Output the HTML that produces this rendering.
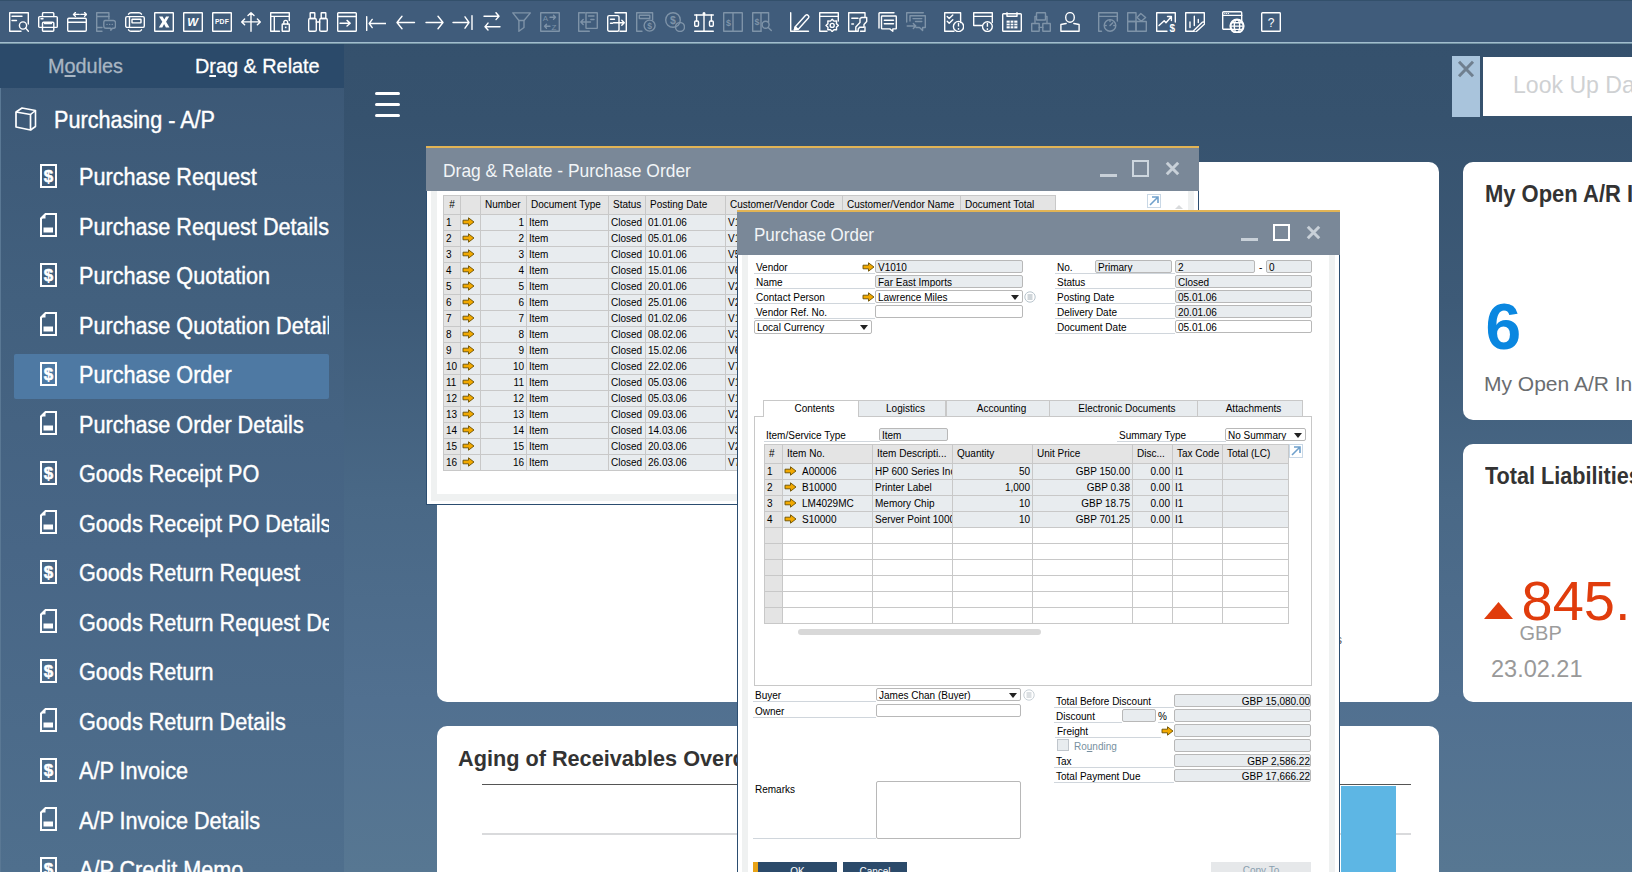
<!DOCTYPE html><html><head><meta charset="utf-8"><style>
*{box-sizing:border-box;margin:0;padding:0}
html,body{width:1632px;height:872px;overflow:hidden}
body{position:relative;font-family:"Liberation Sans",sans-serif;background:linear-gradient(180deg,#34506c 0px,#36526e 120px,#3d5a77 300px,#496886 500px,#517090 700px,#577792 872px)}
.a{position:absolute}
.nw{white-space:nowrap}
#tb{left:0;top:0;width:1632px;height:42px;background:#405c7b;border-top:1px solid #33506b}
#tbline{left:0;top:42px;width:1632px;height:2px;background:linear-gradient(180deg,#a2bdce 50%,#7393a2 50%)}
#side{left:0;top:44px;width:344px;height:828px;background:linear-gradient(180deg,#3b5775 0px,#42607e 256px,#486686 506px,#4f6f8d 828px);border-left:1px solid #5a7894}
#tabs{left:0;top:44px;width:344px;height:44px;background:#2b4a6a}
.st{color:#fff;font-size:23px;white-space:nowrap;line-height:26px;transform:scaleX(0.94);transform-origin:0 0;-webkit-text-stroke:0.4px #fff}
.card{background:#fff;border-radius:10px}
.win{background:#fff}
.tbar{background:#7a8898;border-top:2px solid #e2b455}
.ttl{color:#f2f5f7;font-size:17px;line-height:20px;white-space:nowrap}
.g{border-collapse:collapse;font-size:10px;color:#000;table-layout:fixed}
.g td{border:1px solid #c8c8c8;height:16px;padding:0 2px;white-space:nowrap;overflow:hidden;background:#e8ecef;line-height:14px}
.g tr.h td{background:#e4e4e4;height:19px}
.g td.rn{background:#e4e4e4}
.g td.r{text-align:right}
.g tr.e td{background:#fff}
.g tr.e td.rn{background:#e4e4e4}
.lbl{font-size:10px;color:#000;white-space:nowrap;line-height:13px;padding-top:1px}
.ul{border-bottom:1px solid #d0d6dc}
.fld{border:1px solid #b8b8b8;border-radius:2px;background:#e8ecef;font-size:10px;line-height:11px;padding:1px 2px 0 2px;white-space:nowrap;overflow:hidden}
.fw{background:#fff}
.dd:after{content:"";position:absolute;right:3px;top:4px;border-left:4px solid transparent;border-right:4px solid transparent;border-top:5px solid #222}
.tab{border:1px solid #c8c8c8;border-bottom:none;background:#e8ecef;font-size:10px;text-align:center;line-height:15px;white-space:nowrap;padding-left:7px}
</style></head><body>
<div id="tb" class="a"></div><div id="tbline" class="a"></div>
<svg class="a" style="left:9px;top:12px" width="20" height="20" viewBox="0 0 20 20" fill="none" stroke="#ffffff" stroke-width="1.4" stroke-linecap="round" stroke-linejoin="round"><path d="M12 19.3H0.7V0.7H19.3V12"/><path d="M3 4.3H13M3 8.5H7.5"/><circle cx="14" cy="13.5" r="3.6"/><path d="M16.6 16.1L19.4 19.3"/></svg><svg class="a" style="left:38px;top:12px" width="20" height="20" viewBox="0 0 20 20" fill="none" stroke="#ffffff" stroke-width="1.4" stroke-linecap="round" stroke-linejoin="round"><path d="M4.5 4.5V1.8a1.2 1.2 0 0 1 1.2-1.2H14.6a1.2 1.2 0 0 1 1.2 1.2V4.5"/><rect x="0.7" y="4.6" width="18.6" height="10.8" rx="1"/><rect x="4.5" y="10.2" width="11.3" height="9.1" rx="1"/><path d="M3 6.8H5"/><path d="M6.5 11.5H13.5"/></svg><svg class="a" style="left:67px;top:12px" width="20" height="20" viewBox="0 0 20 20" fill="none" stroke="#ffffff" stroke-width="1.4" stroke-linecap="round" stroke-linejoin="round"><rect x="0.7" y="6.3" width="18.6" height="13" rx="1.2"/><path d="M0.7 10.3H19.3"/><path d="M6.5 2.4H12.2M6.5 2.4L8.4 0.6M6.5 2.4L8.4 4.2M13.8 2.4H19.5M19.5 2.4L17.6 0.6M19.5 2.4L17.6 4.2"/></svg><svg class="a" style="left:96px;top:12px" width="20" height="20" viewBox="0 0 20 20" fill="none" stroke="#7e93a8" stroke-width="1.4" stroke-linecap="round" stroke-linejoin="round"><path d="M6 19.3H0.7V0.7H12.9V7"/><path d="M0.7 4.5H12.9M0.7 15.5H6"/><path d="M9 8.5H17.5Q19.5 8.5 19.5 10.8V14Q19.5 16.3 17.5 16.3H16.5L14.8 18.3V16.3H10Q7.8 16.3 7.8 14V10.8Q7.8 8.5 9 8.5Z"/><path d="M11 12.4h.1M13.6 12.4h.1M16.2 12.4h.1"/></svg><svg class="a" style="left:125px;top:12px" width="20" height="20" viewBox="0 0 20 20" fill="none" stroke="#ffffff" stroke-width="1.4" stroke-linecap="round" stroke-linejoin="round"><rect x="0.7" y="4.6" width="18.6" height="10.8" rx="1.5"/><path d="M4.5 4.6V15.4"/><rect x="7" y="7.3" width="9" height="3.6" rx="0.3"/><path d="M3.5 2.2Q4.5 0.7 6 0.7H14Q15.5 0.7 16.5 2.2M3.5 17.8Q4.5 19.3 6 19.3H14Q15.5 19.3 16.5 17.8"/></svg><svg class="a" style="left:154px;top:12px" width="20" height="20" viewBox="0 0 20 20" fill="none" stroke="#ffffff" stroke-width="1.4" stroke-linecap="round" stroke-linejoin="round"><rect x="0.7" y="0.7" width="18.6" height="18.6" rx="0.3"/><path d="M5 4.5H8.6L10.3 7.6L12 4.5H15.2L12.1 9.7L15.5 15.5H11.9L10.1 12.1L8.3 15.5H4.8L8.3 9.7Z" fill="#fff" stroke="none"/></svg><svg class="a" style="left:183px;top:12px" width="20" height="20" viewBox="0 0 20 20" fill="none" stroke="#ffffff" stroke-width="1.4" stroke-linecap="round" stroke-linejoin="round"><rect x="0.7" y="0.7" width="18.6" height="18.6" rx="0.3"/><text x="9.8" y="13.6" font-family="Liberation Sans" font-weight="bold" font-style="italic" font-size="11.5" fill="#fff" stroke="none" text-anchor="middle">W</text></svg><svg class="a" style="left:212px;top:12px" width="20" height="20" viewBox="0 0 20 20" fill="none" stroke="#ffffff" stroke-width="1.4" stroke-linecap="round" stroke-linejoin="round"><rect x="0.7" y="0.7" width="18.6" height="18.6" rx="0.3"/><text x="10" y="12.3" font-family="Liberation Sans" font-weight="bold" font-size="6.8" fill="#fff" stroke="none" text-anchor="middle" letter-spacing="0.2">PDF</text></svg><svg class="a" style="left:241px;top:12px" width="20" height="20" viewBox="0 0 20 20" fill="none" stroke="#ffffff" stroke-width="1.4" stroke-linecap="round" stroke-linejoin="round"><path d="M10 0.7V19.3M0.7 9.9H19.3M7 3.6L10 0.7L13 3.6M3.6 7L0.7 9.9L3.6 12.8M16.4 7L19.3 9.9L16.4 12.8"/></svg><svg class="a" style="left:270px;top:12px" width="20" height="20" viewBox="0 0 20 20" fill="none" stroke="#ffffff" stroke-width="1.4" stroke-linecap="round" stroke-linejoin="round"><path d="M9.5 19.3H0.7V0.7H19.3V8.5"/><path d="M0.7 4.4H19.3M4.3 4.4V19.3"/><rect x="12.2" y="12" width="7.1" height="7.3" rx="0.4"/><path d="M13.8 12V10.3a1.9 1.9 0 0 1 3.8 0V12"/><rect x="14.9" y="14.6" width="1.6" height="1.6" fill="#fff" stroke="none"/></svg><svg class="a" style="left:308px;top:12px" width="20" height="20" viewBox="0 0 20 20" fill="none" stroke="#ffffff" stroke-width="1.4" stroke-linecap="round" stroke-linejoin="round"><rect x="0.7" y="6.5" width="7.6" height="12.8" rx="1.4"/><rect x="11.7" y="6.5" width="7.6" height="12.8" rx="1.4"/><rect x="2.2" y="0.7" width="4.6" height="5.8" rx="0.4"/><rect x="13.2" y="0.7" width="4.6" height="5.8" rx="0.4"/><path d="M8.3 10H11.7"/></svg><svg class="a" style="left:337px;top:12px" width="20" height="20" viewBox="0 0 20 20" fill="none" stroke="#ffffff" stroke-width="1.4" stroke-linecap="round" stroke-linejoin="round"><rect x="0.7" y="0.7" width="18.6" height="18.6" rx="0.8"/><path d="M0.7 4.5H19.3M3 11.2H13.2M10 8.4L13.2 11.2L10 14"/></svg><svg class="a" style="left:366px;top:14px" width="20" height="20" viewBox="0 0 20 20" fill="none" stroke="#ffffff" stroke-width="1.4" stroke-linecap="round" stroke-linejoin="round"><path d="M0.7 2.6V16.4M3.2 9.5H19.8M3.2 9.5L6.2 5.4M3.2 9.5L6.2 13.6"/></svg><svg class="a" style="left:396px;top:13px" width="20" height="20" viewBox="0 0 20 20" fill="none" stroke="#ffffff" stroke-width="1.4" stroke-linecap="round" stroke-linejoin="round"><path d="M1 9.5H18.5M1 9.5L6 3.2M1 9.5L6 15.8"/></svg><svg class="a" style="left:425px;top:13px" width="20" height="20" viewBox="0 0 20 20" fill="none" stroke="#ffffff" stroke-width="1.4" stroke-linecap="round" stroke-linejoin="round"><path d="M1 9.5H18M18 9.5L13 3.2M18 9.5L13 15.8"/></svg><svg class="a" style="left:452px;top:13px" width="21" height="20" viewBox="0 0 21 20" fill="none" stroke="#ffffff" stroke-width="1.4" stroke-linecap="round" stroke-linejoin="round"><path d="M1 9.5H17M17 9.5L13 3.8M17 9.5L13 15.2M20 2.6V16.4"/></svg><svg class="a" style="left:483px;top:12px" width="20" height="20" viewBox="0 0 20 20" fill="none" stroke="#ffffff" stroke-width="1.4" stroke-linecap="round" stroke-linejoin="round"><path d="M1 4.3H16M16 4.3L13 0.7M16 4.3L13 7.6M2 14.7H17M2 14.7L5 11.1M2 14.7L5 18"/></svg><svg class="a" style="left:512px;top:12px" width="20" height="20" viewBox="0 0 20 20" fill="none" stroke="#7e93a8" stroke-width="1.4" stroke-linecap="round" stroke-linejoin="round"><path d="M0.8 0.9H18.4L12 8.5V15.5L6.9 19.3V8.5Z"/><path d="M6.9 8.5H12"/></svg><svg class="a" style="left:540px;top:12px" width="20" height="20" viewBox="0 0 20 20" fill="none" stroke="#7e93a8" stroke-width="1.4" stroke-linecap="round" stroke-linejoin="round"><rect x="0.7" y="0.7" width="18.6" height="18.6" rx="0.2"/><text x="5.5" y="9.2" font-family="Liberation Sans" font-size="8" fill="#7e93a8" stroke="none" text-anchor="middle">A</text><text x="14" y="17.5" font-family="Liberation Sans" font-size="8" fill="#7e93a8" stroke="none" text-anchor="middle">Z</text><path d="M10 5.2H15.5M13.5 3.2L15.5 5.2L13.5 7.2M4.5 14.2H10M6.5 12.2L4.5 14.2L6.5 16.2"/></svg><svg class="a" style="left:578px;top:12px" width="20" height="20" viewBox="0 0 20 20" fill="none" stroke="#7e93a8" stroke-width="1.4" stroke-linecap="round" stroke-linejoin="round"><path d="M11.3 19.3H0.7V0.7H7"/><rect x="8" y="0.7" width="11.3" height="15.7" rx="0.3"/><path d="M10.5 4H16M12.8 7.5H16M2.8 10H12.5M2.8 10L5.2 7.5M2.8 10L5.2 12.5"/></svg><svg class="a" style="left:607px;top:12px" width="20" height="20" viewBox="0 0 20 20" fill="none" stroke="#ffffff" stroke-width="1.4" stroke-linecap="round" stroke-linejoin="round"><path d="M8 0.7H19.3V19.3H13"/><rect x="0.7" y="3.6" width="11.3" height="15.7" rx="1.5"/><path d="M3.5 7.2H7.5M3.5 11.3H5.5M6.5 10.8H17.3M17.3 10.8L14.8 8.3M17.3 10.8L14.8 13.3"/></svg><svg class="a" style="left:636px;top:12px" width="20" height="20" viewBox="0 0 20 20" fill="none" stroke="#7e93a8" stroke-width="1.4" stroke-linecap="round" stroke-linejoin="round"><path d="M6 19.3H0.7V0.7H16.6V8"/><rect x="3.3" y="3.3" width="10.5" height="3.2" rx="0.3"/><circle cx="13.6" cy="13.6" r="5.5"/><text x="13.6" y="16.8" font-family="Liberation Sans" font-weight="bold" font-size="8.5" fill="#7e93a8" stroke="none" text-anchor="middle">$</text></svg><svg class="a" style="left:665px;top:12px" width="20" height="20" viewBox="0 0 20 20" fill="none" stroke="#7e93a8" stroke-width="1.4" stroke-linecap="round" stroke-linejoin="round"><circle cx="8" cy="8" r="7.3"/><circle cx="15" cy="15" r="4.5"/><text x="8" y="11.6" font-family="Liberation Sans" font-weight="bold" font-size="10.5" fill="#7e93a8" stroke="none" text-anchor="middle">$</text></svg><svg class="a" style="left:694px;top:12px" width="20" height="20" viewBox="0 0 20 20" fill="none" stroke="#ffffff" stroke-width="1.4" stroke-linecap="round" stroke-linejoin="round"><path d="M10 1.5V19.3M0.7 19.3H19.3M0.7 3H19.3"/><rect x="0.7" y="9" width="3.8" height="5.3" rx="1"/><rect x="15.5" y="9" width="3.8" height="5.3" rx="1"/><path d="M2.6 3V9M17.4 3V9"/><circle cx="10" cy="1.5" r="0.8"/></svg><svg class="a" style="left:723px;top:12px" width="20" height="20" viewBox="0 0 20 20" fill="none" stroke="#7e93a8" stroke-width="1.4" stroke-linecap="round" stroke-linejoin="round"><rect x="0.7" y="0.7" width="18.6" height="18.6" rx="0.2"/><path d="M10 0.7V19.3"/><text x="5.6" y="13.5" font-family="Liberation Sans" font-weight="bold" font-size="9" fill="#7e93a8" stroke="none" text-anchor="middle">$</text></svg><svg class="a" style="left:752px;top:12px" width="20" height="20" viewBox="0 0 20 20" fill="none" stroke="#7e93a8" stroke-width="1.4" stroke-linecap="round" stroke-linejoin="round"><path d="M9 19.3H0.7V0.7H16.6V10"/><path d="M9 0.7V19.3"/><text x="5" y="12.5" font-family="Liberation Sans" font-weight="bold" font-size="9" fill="#7e93a8" stroke="none" text-anchor="middle">$</text><circle cx="13.6" cy="12.8" r="3.5"/><path d="M16.2 15.4L19.3 18.6"/></svg><svg class="a" style="left:790px;top:12px" width="20" height="20" viewBox="0 0 20 20" fill="none" stroke="#ffffff" stroke-width="1.4" stroke-linecap="round" stroke-linejoin="round"><path d="M0.7 0.7V19.3H18.5"/><path d="M5.5 14.5L15.6 3.2a2 2 0 0 1 2.8 2.8L8.3 17.2L4.4 17.7Z"/><path d="M4.4 17.7L5.2 14.8L7.5 16.8Z" fill="#fff"/></svg><svg class="a" style="left:819px;top:12px" width="20" height="20" viewBox="0 0 20 20" fill="none" stroke="#ffffff" stroke-width="1.4" stroke-linecap="round" stroke-linejoin="round"><path d="M8 19.3H0.7V0.7H19.3V9"/><path d="M0.7 4.4H19.3"/><polygon points="19.40,13.40 17.45,15.16 17.58,17.78 14.96,17.65 13.20,19.60 11.44,17.65 8.82,17.78 8.95,15.16 7.00,13.40 8.95,11.64 8.82,9.02 11.44,9.15 13.20,7.20 14.96,9.15 17.58,9.02 17.45,11.64" /><circle cx="13.2" cy="13.4" r="2"/></svg><svg class="a" style="left:848px;top:12px" width="20" height="20" viewBox="0 0 20 20" fill="none" stroke="#ffffff" stroke-width="1.4" stroke-linecap="round" stroke-linejoin="round"><path d="M8 19.3H0.7V0.7H17V4.8M12.5 19.3H17V15"/><path d="M3.8 6.3H10M3.8 12H5.5"/><path d="M13.8 5.5L18.7 5.5V9.5L16 12.5V15.3H11.6L10.2 17V19.3H7.8V15L12 10.5V6.3Z"/></svg><svg class="a" style="left:877px;top:12px" width="21" height="20" viewBox="0 0 21 20" fill="none" stroke="#ffffff" stroke-width="1.4" stroke-linecap="round" stroke-linejoin="round"><path d="M2 16V1.3a0.6 0.6 0 0 1 0.6-0.6H17"/><path d="M5.2 4H18.6a0.7 0.7 0 0 1 .7.7V16.2a0.7 0.7 0 0 1-.7.7H15.8V19.3L12.8 16.9H5.2a0.7 0.7 0 0 1-.7-.7V4.7a0.7 0.7 0 0 1 .7-.7Z"/><path d="M7.3 8.2H16.5M7.3 11.8H16.5"/></svg><svg class="a" style="left:906px;top:12px" width="20" height="20" viewBox="0 0 20 20" fill="none" stroke="#7e93a8" stroke-width="1.4" stroke-linecap="round" stroke-linejoin="round"><path d="M0.7 10V0.7H17.3"/><path d="M4 3.8H19.3V15.5H16.6V18.5L13.5 15.5H10M4 3.8V9"/><path d="M7 6.6H15.8M9.5 9.5H15.8M1.2 14H9.8M7.3 11.5L9.8 14L7.3 16.5"/></svg><svg class="a" style="left:944px;top:12px" width="20" height="20" viewBox="0 0 20 20" fill="none" stroke="#ffffff" stroke-width="1.4" stroke-linecap="round" stroke-linejoin="round"><path d="M10 19.3H0.7V0.7H16.6V10.5"/><path d="M3.2 4.6L5.2 6.6L8.8 3M3.2 9.3L5.2 11.3L8.8 7.7"/><circle cx="14.5" cy="14.5" r="5.1"/><path d="M13.8 10.8H15.2V14.6H13.8ZM13.8 16H15.2V17.7H13.8Z" fill="#fff" stroke="none"/></svg><svg class="a" style="left:973px;top:12px" width="21" height="20" viewBox="0 0 21 20" fill="none" stroke="#ffffff" stroke-width="1.4" stroke-linecap="round" stroke-linejoin="round"><path d="M8.5 13.5H0.7V0.7H19.3V10.5"/><path d="M0.7 4.4H19.3"/><circle cx="14.4" cy="14.6" r="4.9"/><path d="M13.7 11H15.1V14.8H13.7ZM13.7 16.2H15.1V17.9H13.7Z" fill="#fff" stroke="none"/></svg><svg class="a" style="left:1002px;top:12px" width="21" height="20" viewBox="0 0 21 20" fill="none" stroke="#ffffff" stroke-width="1.4" stroke-linecap="round" stroke-linejoin="round"><rect x="0.7" y="1.8" width="18.6" height="17.5" rx="0.8"/><path d="M5 0.7V4.2H15V0.7"/><rect x="4.6" y="8.6" width="10.8" height="7.8" fill="#fff" stroke="none"/><path d="M4.6 11.2H15.4M4.6 13.8H15.4M8.2 8.6V16.4M11.8 8.6V16.4" stroke="#405c7b" stroke-width="0.9"/></svg><svg class="a" style="left:1031px;top:12px" width="20" height="20" viewBox="0 0 20 20" fill="none" stroke="#7e93a8" stroke-width="1.4" stroke-linecap="round" stroke-linejoin="round"><rect x="5.5" y="0.7" width="9" height="7.3" rx="0.5"/><rect x="0.7" y="11.5" width="7.5" height="7.8" rx="0.2"/><rect x="11.8" y="11.5" width="7.5" height="7.8" rx="0.2"/><path d="M4 11.5V4.5H5.5M16 11.5V4.5H14.5M8.2 15.4H11.8"/></svg><svg class="a" style="left:1060px;top:12px" width="20" height="20" viewBox="0 0 20 20" fill="none" stroke="#ffffff" stroke-width="1.4" stroke-linecap="round" stroke-linejoin="round"><ellipse cx="10" cy="5.4" rx="4.3" ry="4.8"/><path d="M6.2 11.5Q3.2 12.2 0.9 12.5V19.3H19.1V12.5Q16.8 12.2 13.8 11.5"/></svg><svg class="a" style="left:1098px;top:12px" width="20" height="20" viewBox="0 0 20 20" fill="none" stroke="#7e93a8" stroke-width="1.4" stroke-linecap="round" stroke-linejoin="round"><path d="M3.5 19.3H0.7V0.7H19.3V9"/><path d="M0.7 4.4H19.3"/><circle cx="12" cy="13.5" r="5.8"/><path d="M12 13.5L14.8 10.8M7.3 13.5H8.2M12 8.8V9.6M16.7 13.5H15.8"/></svg><svg class="a" style="left:1127px;top:12px" width="20" height="20" viewBox="0 0 20 20" fill="none" stroke="#7e93a8" stroke-width="1.4" stroke-linecap="round" stroke-linejoin="round"><rect x="0.7" y="0.7" width="8.3" height="8.8" rx="0.1"/><rect x="0.7" y="9.5" width="8.3" height="9.8" rx="0.1"/><rect x="9" y="9.5" width="10.3" height="9.8" rx="0.1"/><path d="M13.8 1.5L18.6 5.5L14.3 9.3L10 5.5Z"/></svg><svg class="a" style="left:1156px;top:12px" width="20" height="20" viewBox="0 0 20 20" fill="none" stroke="#ffffff" stroke-width="1.4" stroke-linecap="round" stroke-linejoin="round"><path d="M11 19.3H0.7V0.7H19.3V10"/><path d="M3 13.5L8.2 8.7L10 10.8L15.2 4.8M11.5 4.5H15.4V8.5"/><text x="16.3" y="19.8" font-family="Liberation Sans" font-weight="bold" font-size="10" fill="#fff" stroke="none" text-anchor="middle">$</text></svg><svg class="a" style="left:1185px;top:12px" width="20" height="20" viewBox="0 0 20 20" fill="none" stroke="#ffffff" stroke-width="1.4" stroke-linecap="round" stroke-linejoin="round"><path d="M9 19.3H0.7V0.7H19.3V11"/><path d="M5 10V15.5M9.3 4.2V13.5M13.3 7.5V10.5"/><path d="M8.8 18.6L17.3 10.3a1.4 1.4 0 0 1 2 2L10.8 20L8.5 20.3Z"/></svg><svg class="a" style="left:1222px;top:11px" width="23" height="22" viewBox="0 0 23 22" fill="none" stroke="#ffffff" stroke-width="1.4" stroke-linecap="round" stroke-linejoin="round"><rect x="0.7" y="0.7" width="19" height="17.6" rx="1"/><path d="M0.7 4.4H19.7"/><path d="M2.8 2.5h.1M4.6 2.5h.1M6.4 2.5h.1" stroke-width="1.2"/><circle cx="15" cy="15.1" r="6.9" fill="#405c7b"/><circle cx="15" cy="15.1" r="6.2"/><ellipse cx="15" cy="15.1" rx="2.7" ry="6.2"/><path d="M8.8 15.1H21.2M9.8 11.8H20.2M9.8 18.4H20.2"/></svg><svg class="a" style="left:1261px;top:12px" width="20" height="20" viewBox="0 0 20 20" fill="none" stroke="#ffffff" stroke-width="1.4" stroke-linecap="round" stroke-linejoin="round"><rect x="0.7" y="0.7" width="18.6" height="18.6" rx="0.8"/><text x="10" y="14.5" font-family="Liberation Sans" font-size="12" fill="#fff" stroke="none" text-anchor="middle">?</text></svg>
<div id="side" class="a"></div><div id="tabs" class="a"></div>
<div class="a nw" style="left:48px;top:54px;font-size:21px;line-height:24px;color:#a9b6c3;transform:scaleX(0.945);transform-origin:0 0;-webkit-text-stroke:0.3px #a9b6c3">M<u>o</u>dules</div>
<div class="a nw" style="left:195px;top:54px;font-size:21px;line-height:24px;color:#fff;transform:scaleX(0.945);transform-origin:0 0;-webkit-text-stroke:0.3px #fff">D<u>r</u>ag &amp; Relate</div>
<div class="a st" style="left:54px;top:107px">Purchasing - A/P</div>
<svg class="a" style="left:14px;top:106px" width="25" height="26" viewBox="0 0 25 26"><path d="M2 6L16.5 8.5V24L2 21Z" fill="none" stroke="#fff" stroke-width="1.7" stroke-linejoin="round"/><path d="M2 6L8 2L21.5 4.5L16.5 8.5M21.5 4.5V20.5L16.5 24" fill="none" stroke="#fff" stroke-width="1.6" stroke-linejoin="round"/></svg>
<div class="a" style="left:14px;top:354px;width:315px;height:45px;background:#4e79a3;border-radius:2px"></div>
<div class="a" style="left:79px;top:164.3px;width:250px;height:30px;overflow:hidden"><div class="st">Purchase Request</div></div>
<svg class="a" style="left:40px;top:163.8px" width="17" height="24" viewBox="0 0 17 24"><rect x="1" y="1" width="15" height="22" fill="none" stroke="#fff" stroke-width="2"/><text x="8.5" y="17.8" font-family="Liberation Sans" font-weight="bold" font-size="17" fill="#fff" stroke="#fff" stroke-width="0.5" text-anchor="middle">$</text></svg>
<div class="a" style="left:79px;top:213.8px;width:250px;height:30px;overflow:hidden"><div class="st">Purchase Request Details</div></div>
<svg class="a" style="left:40px;top:213.3px" width="17" height="24" viewBox="0 0 17 24"><path d="M5.5 1H16V23H1V5.5Z" fill="none" stroke="#fff" stroke-width="2"/><path d="M1 5.5L5.5 1V5.5Z" fill="#fff"/><rect x="3.5" y="14.5" width="9.5" height="5" fill="#fff"/></svg>
<div class="a" style="left:79px;top:263.3px;width:250px;height:30px;overflow:hidden"><div class="st">Purchase Quotation</div></div>
<svg class="a" style="left:40px;top:262.8px" width="17" height="24" viewBox="0 0 17 24"><rect x="1" y="1" width="15" height="22" fill="none" stroke="#fff" stroke-width="2"/><text x="8.5" y="17.8" font-family="Liberation Sans" font-weight="bold" font-size="17" fill="#fff" stroke="#fff" stroke-width="0.5" text-anchor="middle">$</text></svg>
<div class="a" style="left:79px;top:312.8px;width:250px;height:30px;overflow:hidden"><div class="st">Purchase Quotation Detail</div></div>
<svg class="a" style="left:40px;top:312.3px" width="17" height="24" viewBox="0 0 17 24"><path d="M5.5 1H16V23H1V5.5Z" fill="none" stroke="#fff" stroke-width="2"/><path d="M1 5.5L5.5 1V5.5Z" fill="#fff"/><rect x="3.5" y="14.5" width="9.5" height="5" fill="#fff"/></svg>
<div class="a" style="left:79px;top:362.3px;width:250px;height:30px;overflow:hidden"><div class="st">Purchase Order</div></div>
<svg class="a" style="left:40px;top:361.8px" width="17" height="24" viewBox="0 0 17 24"><rect x="1" y="1" width="15" height="22" fill="none" stroke="#fff" stroke-width="2"/><text x="8.5" y="17.8" font-family="Liberation Sans" font-weight="bold" font-size="17" fill="#fff" stroke="#fff" stroke-width="0.5" text-anchor="middle">$</text></svg>
<div class="a" style="left:79px;top:411.8px;width:250px;height:30px;overflow:hidden"><div class="st">Purchase Order Details</div></div>
<svg class="a" style="left:40px;top:411.3px" width="17" height="24" viewBox="0 0 17 24"><path d="M5.5 1H16V23H1V5.5Z" fill="none" stroke="#fff" stroke-width="2"/><path d="M1 5.5L5.5 1V5.5Z" fill="#fff"/><rect x="3.5" y="14.5" width="9.5" height="5" fill="#fff"/></svg>
<div class="a" style="left:79px;top:461.3px;width:250px;height:30px;overflow:hidden"><div class="st">Goods Receipt PO</div></div>
<svg class="a" style="left:40px;top:460.8px" width="17" height="24" viewBox="0 0 17 24"><rect x="1" y="1" width="15" height="22" fill="none" stroke="#fff" stroke-width="2"/><text x="8.5" y="17.8" font-family="Liberation Sans" font-weight="bold" font-size="17" fill="#fff" stroke="#fff" stroke-width="0.5" text-anchor="middle">$</text></svg>
<div class="a" style="left:79px;top:510.8px;width:250px;height:30px;overflow:hidden"><div class="st">Goods Receipt PO Details</div></div>
<svg class="a" style="left:40px;top:510.3px" width="17" height="24" viewBox="0 0 17 24"><path d="M5.5 1H16V23H1V5.5Z" fill="none" stroke="#fff" stroke-width="2"/><path d="M1 5.5L5.5 1V5.5Z" fill="#fff"/><rect x="3.5" y="14.5" width="9.5" height="5" fill="#fff"/></svg>
<div class="a" style="left:79px;top:560.3px;width:250px;height:30px;overflow:hidden"><div class="st">Goods Return Request</div></div>
<svg class="a" style="left:40px;top:559.8px" width="17" height="24" viewBox="0 0 17 24"><rect x="1" y="1" width="15" height="22" fill="none" stroke="#fff" stroke-width="2"/><text x="8.5" y="17.8" font-family="Liberation Sans" font-weight="bold" font-size="17" fill="#fff" stroke="#fff" stroke-width="0.5" text-anchor="middle">$</text></svg>
<div class="a" style="left:79px;top:609.8px;width:250px;height:30px;overflow:hidden"><div class="st">Goods Return Request De</div></div>
<svg class="a" style="left:40px;top:609.3px" width="17" height="24" viewBox="0 0 17 24"><path d="M5.5 1H16V23H1V5.5Z" fill="none" stroke="#fff" stroke-width="2"/><path d="M1 5.5L5.5 1V5.5Z" fill="#fff"/><rect x="3.5" y="14.5" width="9.5" height="5" fill="#fff"/></svg>
<div class="a" style="left:79px;top:659.3px;width:250px;height:30px;overflow:hidden"><div class="st">Goods Return</div></div>
<svg class="a" style="left:40px;top:658.8px" width="17" height="24" viewBox="0 0 17 24"><rect x="1" y="1" width="15" height="22" fill="none" stroke="#fff" stroke-width="2"/><text x="8.5" y="17.8" font-family="Liberation Sans" font-weight="bold" font-size="17" fill="#fff" stroke="#fff" stroke-width="0.5" text-anchor="middle">$</text></svg>
<div class="a" style="left:79px;top:708.8px;width:250px;height:30px;overflow:hidden"><div class="st">Goods Return Details</div></div>
<svg class="a" style="left:40px;top:708.3px" width="17" height="24" viewBox="0 0 17 24"><path d="M5.5 1H16V23H1V5.5Z" fill="none" stroke="#fff" stroke-width="2"/><path d="M1 5.5L5.5 1V5.5Z" fill="#fff"/><rect x="3.5" y="14.5" width="9.5" height="5" fill="#fff"/></svg>
<div class="a" style="left:79px;top:758.3px;width:250px;height:30px;overflow:hidden"><div class="st">A/P Invoice</div></div>
<svg class="a" style="left:40px;top:757.8px" width="17" height="24" viewBox="0 0 17 24"><rect x="1" y="1" width="15" height="22" fill="none" stroke="#fff" stroke-width="2"/><text x="8.5" y="17.8" font-family="Liberation Sans" font-weight="bold" font-size="17" fill="#fff" stroke="#fff" stroke-width="0.5" text-anchor="middle">$</text></svg>
<div class="a" style="left:79px;top:807.8px;width:250px;height:30px;overflow:hidden"><div class="st">A/P Invoice Details</div></div>
<svg class="a" style="left:40px;top:807.3px" width="17" height="24" viewBox="0 0 17 24"><path d="M5.5 1H16V23H1V5.5Z" fill="none" stroke="#fff" stroke-width="2"/><path d="M1 5.5L5.5 1V5.5Z" fill="#fff"/><rect x="3.5" y="14.5" width="9.5" height="5" fill="#fff"/></svg>
<div class="a" style="left:79px;top:857.3px;width:250px;height:30px;overflow:hidden"><div class="st">A/P Credit Memo</div></div>
<svg class="a" style="left:40px;top:856.8px" width="17" height="24" viewBox="0 0 17 24"><rect x="1" y="1" width="15" height="22" fill="none" stroke="#fff" stroke-width="2"/><text x="8.5" y="17.8" font-family="Liberation Sans" font-weight="bold" font-size="17" fill="#fff" stroke="#fff" stroke-width="0.5" text-anchor="middle">$</text></svg>
<div class="a" style="left:375px;top:92px;width:25px;height:3px;border-radius:2px;background:#fff"></div>
<div class="a" style="left:375px;top:103px;width:25px;height:3px;border-radius:2px;background:#fff"></div>
<div class="a" style="left:375px;top:114px;width:25px;height:3px;border-radius:2px;background:#fff"></div>
<div class="a" style="left:1452px;top:56px;width:28px;height:61px;background:#a9c4dc"></div>
<svg class="a" style="left:1457px;top:60px" width="18" height="18" viewBox="0 0 18 18"><path d="M2 1.8L16 16.2M16 1.8L2 16.2" stroke="#6f7f8f" stroke-width="3"/></svg>
<div class="a" style="left:1483px;top:57px;width:149px;height:59px;background:#fff"></div>
<div class="a nw" style="left:1513px;top:70.5px;font-size:24.4px;line-height:28px;color:#cfd1d3;transform:scaleX(0.945);transform-origin:0 0">Look Up Data</div>
<div class="a card" style="left:437px;top:162px;width:1002px;height:540px"></div>
<div class="a card" style="left:1463px;top:162px;width:200px;height:258px"></div>
<div class="a card" style="left:1463px;top:444px;width:200px;height:258px"></div>
<div class="a card" style="left:437px;top:726px;width:1002px;height:200px"></div>
<div class="a nw" style="left:1484.5px;top:181.8px;font-size:23px;line-height:24px;font-weight:bold;color:#333;transform:scaleX(0.955);transform-origin:0 0">My Open A/R In</div>
<div class="a nw" style="left:1485.5px;top:291.8px;font-size:64px;line-height:70px;font-weight:bold;color:#0a87e0">6</div>
<div class="a nw" style="left:1484px;top:371.6px;font-size:21px;line-height:24px;color:#6a6d70">My Open A/R In</div>
<div class="a nw" style="left:1485px;top:464px;font-size:23px;line-height:24px;font-weight:bold;color:#333;transform:scaleX(0.94);transform-origin:0 0">Total Liabilities</div>
<svg class="a" style="left:1484px;top:602px" width="29" height="17" viewBox="0 0 29 17"><path d="M0 17L14.5 0L29 17Z" fill="#e03c0c"/></svg>
<div class="a nw" style="left:1521.5px;top:570.6px;font-size:56px;line-height:60px;color:#e03c0c">845.</div>
<div class="a nw" style="left:1519.5px;top:621.8px;font-size:20px;line-height:22px;color:#9c9c9c">GBP</div>
<div class="a nw" style="left:1491px;top:654.7px;font-size:23.5px;line-height:28px;color:#999">23.02.21</div>
<div class="a nw" style="left:458px;top:746px;font-size:22px;line-height:26px;font-weight:bold;color:#333;transform:scaleX(0.985);transform-origin:0 0">Aging of Receivables Overdue</div>
<div class="a" style="left:482px;top:784px;width:929px;height:1px;background:#555"></div>
<div class="a" style="left:482px;top:833px;width:929px;height:2px;background:#d9dadc"></div>
<div class="a" style="left:1341px;top:786px;width:55px;height:86px;background:#5db6e4"></div>
<div class="a nw" style="left:1336px;top:633px;font-size:12px;line-height:14px;color:#555">s</div>
<div class="a win" style="left:426px;top:146px;width:773px;height:359px;border-bottom:1px solid #2b4d70;border-left:1px solid #2b4d70;border-right:1px solid #2b4d70"></div>
<div class="a tbar" style="left:426px;top:146px;width:773px;height:45px"></div>
<div class="a ttl" style="left:443px;top:161.4px;font-size:19px;transform:scaleX(0.917);transform-origin:0 0">Drag &amp; Relate - Purchase Order</div>
<div class="a" style="left:1100px;top:174px;width:17px;height:3px;background:#c8d0d8"></div><div class="a" style="left:1132px;top:160px;width:17px;height:17px;border:2px solid #cdd6de"></div><svg class="a" style="left:1165px;top:161px" width="15" height="15" viewBox="0 0 15 15"><path d="M1.8 1.8L13.2 13.2M13.2 1.8L1.8 13.2" stroke="#c8d0d8" stroke-width="3"/></svg>
<div class="a" style="left:431px;top:191px;width:6px;height:310px;background:#eff1f1"></div>
<div class="a" style="left:431px;top:494px;width:767px;height:7px;background:#eff1f1"></div>
<div class="a" style="left:1188px;top:191px;width:6px;height:310px;background:#eff1f1"></div>
<table class="a g" style="left:443px;top:195px;width:612px"><colgroup><col style="width:17px"><col style="width:20px"><col style="width:46px"><col style="width:82px"><col style="width:37px"><col style="width:80px"><col style="width:117px"><col style="width:118px"><col style="width:95px"></colgroup><tr class="h"><td style="text-align:center">#</td><td style="text-align:center"></td><td style="padding-left:4px">Number</td><td style="padding-left:4px">Document Type</td><td style="padding-left:4px">Status</td><td style="padding-left:4px">Posting Date</td><td style="padding-left:4px">Customer/Vendor Code</td><td style="padding-left:4px">Customer/Vendor Name</td><td style="padding-left:4px">Document Total</td></tr><tr><td class="rn">1</td><td></td><td class="r">1</td><td>Item</td><td>Closed</td><td>01.01.06</td><td>V1010</td><td></td><td></td></tr><tr><td class="rn">2</td><td></td><td class="r">2</td><td>Item</td><td>Closed</td><td>05.01.06</td><td>V1010</td><td></td><td></td></tr><tr><td class="rn">3</td><td></td><td class="r">3</td><td>Item</td><td>Closed</td><td>10.01.06</td><td>V5000</td><td></td><td></td></tr><tr><td class="rn">4</td><td></td><td class="r">4</td><td>Item</td><td>Closed</td><td>15.01.06</td><td>V6000</td><td></td><td></td></tr><tr><td class="rn">5</td><td></td><td class="r">5</td><td>Item</td><td>Closed</td><td>20.01.06</td><td>V2000</td><td></td><td></td></tr><tr><td class="rn">6</td><td></td><td class="r">6</td><td>Item</td><td>Closed</td><td>25.01.06</td><td>V2000</td><td></td><td></td></tr><tr><td class="rn">7</td><td></td><td class="r">7</td><td>Item</td><td>Closed</td><td>01.02.06</td><td>V1010</td><td></td><td></td></tr><tr><td class="rn">8</td><td></td><td class="r">8</td><td>Item</td><td>Closed</td><td>08.02.06</td><td>V3000</td><td></td><td></td></tr><tr><td class="rn">9</td><td></td><td class="r">9</td><td>Item</td><td>Closed</td><td>15.02.06</td><td>V6000</td><td></td><td></td></tr><tr><td class="rn">10</td><td></td><td class="r">10</td><td>Item</td><td>Closed</td><td>22.02.06</td><td>V7000</td><td></td><td></td></tr><tr><td class="rn">11</td><td></td><td class="r">11</td><td>Item</td><td>Closed</td><td>05.03.06</td><td>V1010</td><td></td><td></td></tr><tr><td class="rn">12</td><td></td><td class="r">12</td><td>Item</td><td>Closed</td><td>05.03.06</td><td>V1010</td><td></td><td></td></tr><tr><td class="rn">13</td><td></td><td class="r">13</td><td>Item</td><td>Closed</td><td>09.03.06</td><td>V2000</td><td></td><td></td></tr><tr><td class="rn">14</td><td></td><td class="r">14</td><td>Item</td><td>Closed</td><td>14.03.06</td><td>V3000</td><td></td><td></td></tr><tr><td class="rn">15</td><td></td><td class="r">15</td><td>Item</td><td>Closed</td><td>20.03.06</td><td>V2000</td><td></td><td></td></tr><tr><td class="rn">16</td><td></td><td class="r">16</td><td>Item</td><td>Closed</td><td>26.03.06</td><td>V7000</td><td></td><td></td></tr></table>
<svg class="a" style="left:462px;top:217px" width="13" height="10" viewBox="0 0 13 10"><path d="M1 3.2H6.5V0.8L12 5L6.5 9.2V6.8H1Z" fill="#f2a900" stroke="#6b5000" stroke-width="0.9"/></svg>
<svg class="a" style="left:462px;top:233px" width="13" height="10" viewBox="0 0 13 10"><path d="M1 3.2H6.5V0.8L12 5L6.5 9.2V6.8H1Z" fill="#f2a900" stroke="#6b5000" stroke-width="0.9"/></svg>
<svg class="a" style="left:462px;top:249px" width="13" height="10" viewBox="0 0 13 10"><path d="M1 3.2H6.5V0.8L12 5L6.5 9.2V6.8H1Z" fill="#f2a900" stroke="#6b5000" stroke-width="0.9"/></svg>
<svg class="a" style="left:462px;top:265px" width="13" height="10" viewBox="0 0 13 10"><path d="M1 3.2H6.5V0.8L12 5L6.5 9.2V6.8H1Z" fill="#f2a900" stroke="#6b5000" stroke-width="0.9"/></svg>
<svg class="a" style="left:462px;top:281px" width="13" height="10" viewBox="0 0 13 10"><path d="M1 3.2H6.5V0.8L12 5L6.5 9.2V6.8H1Z" fill="#f2a900" stroke="#6b5000" stroke-width="0.9"/></svg>
<svg class="a" style="left:462px;top:297px" width="13" height="10" viewBox="0 0 13 10"><path d="M1 3.2H6.5V0.8L12 5L6.5 9.2V6.8H1Z" fill="#f2a900" stroke="#6b5000" stroke-width="0.9"/></svg>
<svg class="a" style="left:462px;top:313px" width="13" height="10" viewBox="0 0 13 10"><path d="M1 3.2H6.5V0.8L12 5L6.5 9.2V6.8H1Z" fill="#f2a900" stroke="#6b5000" stroke-width="0.9"/></svg>
<svg class="a" style="left:462px;top:329px" width="13" height="10" viewBox="0 0 13 10"><path d="M1 3.2H6.5V0.8L12 5L6.5 9.2V6.8H1Z" fill="#f2a900" stroke="#6b5000" stroke-width="0.9"/></svg>
<svg class="a" style="left:462px;top:345px" width="13" height="10" viewBox="0 0 13 10"><path d="M1 3.2H6.5V0.8L12 5L6.5 9.2V6.8H1Z" fill="#f2a900" stroke="#6b5000" stroke-width="0.9"/></svg>
<svg class="a" style="left:462px;top:361px" width="13" height="10" viewBox="0 0 13 10"><path d="M1 3.2H6.5V0.8L12 5L6.5 9.2V6.8H1Z" fill="#f2a900" stroke="#6b5000" stroke-width="0.9"/></svg>
<svg class="a" style="left:462px;top:377px" width="13" height="10" viewBox="0 0 13 10"><path d="M1 3.2H6.5V0.8L12 5L6.5 9.2V6.8H1Z" fill="#f2a900" stroke="#6b5000" stroke-width="0.9"/></svg>
<svg class="a" style="left:462px;top:393px" width="13" height="10" viewBox="0 0 13 10"><path d="M1 3.2H6.5V0.8L12 5L6.5 9.2V6.8H1Z" fill="#f2a900" stroke="#6b5000" stroke-width="0.9"/></svg>
<svg class="a" style="left:462px;top:409px" width="13" height="10" viewBox="0 0 13 10"><path d="M1 3.2H6.5V0.8L12 5L6.5 9.2V6.8H1Z" fill="#f2a900" stroke="#6b5000" stroke-width="0.9"/></svg>
<svg class="a" style="left:462px;top:425px" width="13" height="10" viewBox="0 0 13 10"><path d="M1 3.2H6.5V0.8L12 5L6.5 9.2V6.8H1Z" fill="#f2a900" stroke="#6b5000" stroke-width="0.9"/></svg>
<svg class="a" style="left:462px;top:441px" width="13" height="10" viewBox="0 0 13 10"><path d="M1 3.2H6.5V0.8L12 5L6.5 9.2V6.8H1Z" fill="#f2a900" stroke="#6b5000" stroke-width="0.9"/></svg>
<svg class="a" style="left:462px;top:457px" width="13" height="10" viewBox="0 0 13 10"><path d="M1 3.2H6.5V0.8L12 5L6.5 9.2V6.8H1Z" fill="#f2a900" stroke="#6b5000" stroke-width="0.9"/></svg>
<svg class="a" style="left:1147px;top:194px" width="14" height="14" viewBox="0 0 14 14"><rect x="0.5" y="0.5" width="13" height="13" fill="#fff" stroke="#c9d8e6"/><path d="M3 11L11 3M5 3H11V9" fill="none" stroke="#6fa0cc" stroke-width="1.6"/></svg>
<div class="a" style="left:1175px;top:205px;width:0;height:0;border-left:4px solid transparent;border-right:4px solid transparent;border-bottom:4px solid #d8dadc"></div>
<div class="a win" style="left:737px;top:210px;width:603px;height:662px;border-left:1px solid #2b4d70;border-right:1px solid #2b4d70"></div>
<div class="a tbar" style="left:737px;top:210px;width:603px;height:45px"></div>
<div class="a ttl" style="left:754px;top:224.7px;font-size:19px;transform:scaleX(0.895);transform-origin:0 0">Purchase Order</div>
<div class="a" style="left:1241px;top:238px;width:17px;height:3px;background:#c8d0d8"></div><div class="a" style="left:1273px;top:224px;width:17px;height:17px;border:2px solid #fff"></div><svg class="a" style="left:1306px;top:225px" width="15" height="15" viewBox="0 0 15 15"><path d="M1.8 1.8L13.2 13.2M13.2 1.8L1.8 13.2" stroke="#c8d0d8" stroke-width="3"/></svg>
<div class="a" style="left:742px;top:255px;width:6px;height:617px;background:#eff1f1"></div>
<div class="a" style="left:1329px;top:255px;width:6px;height:617px;background:#eff1f1"></div>
<div class="a lbl ul" style="left:754px;top:260px;width:121px;height:14px;padding-left:2px">Vendor</div>
<div class="a fld" style="left:875px;top:260px;width:148px;height:13px;">V1010</div>
<svg class="a" style="left:862px;top:262px" width="13" height="10" viewBox="0 0 13 10"><path d="M1 3.2H6.5V0.8L12 5L6.5 9.2V6.8H1Z" fill="#f2a900" stroke="#6b5000" stroke-width="0.9"/></svg>
<div class="a lbl ul" style="left:754px;top:275px;width:121px;height:14px;padding-left:2px">Name</div>
<div class="a fld" style="left:875px;top:275px;width:148px;height:13px;">Far East Imports</div>
<div class="a lbl ul" style="left:754px;top:290px;width:121px;height:14px;padding-left:2px">Contact Person</div>
<div class="a fld fw dd" style="left:875px;top:290px;width:148px;height:13px;">Lawrence Miles</div>
<svg class="a" style="left:862px;top:292px" width="13" height="10" viewBox="0 0 13 10"><path d="M1 3.2H6.5V0.8L12 5L6.5 9.2V6.8H1Z" fill="#f2a900" stroke="#6b5000" stroke-width="0.9"/></svg>
<div class="a lbl ul" style="left:754px;top:305px;width:121px;height:14px;padding-left:2px">Vendor Ref. No.</div>
<div class="a fld fw" style="left:875px;top:305px;width:148px;height:13px;"></div>
<div class="a fld fw dd" style="left:754px;top:320px;width:118px;height:14px;">Local Currency</div>
<svg class="a" style="left:1024px;top:291px" width="12" height="12" viewBox="0 0 12 12"><circle cx="6" cy="6" r="5.2" fill="#fff" stroke="#b8c4cc"/><path d="M3.5 4H8.5M3.5 6H8.5M3.5 8H8.5" stroke="#a0acb4"/></svg>
<div class="a lbl ul" style="left:1055px;top:260px;width:120px;height:14px;padding-left:2px">No.</div>
<div class="a fld" style="left:1095px;top:260px;width:77px;height:13px;">Primary</div>
<div class="a fld" style="left:1175px;top:260px;width:80px;height:13px;">2</div>
<div class="a lbl" style="left:1259px;top:260px">-</div>
<div class="a fld" style="left:1266px;top:260px;width:46px;height:13px;">0</div>
<div class="a lbl ul" style="left:1055px;top:275px;width:120px;height:14px;padding-left:2px">Status</div>
<div class="a fld" style="left:1175px;top:275px;width:137px;height:13px;">Closed</div>
<div class="a lbl ul" style="left:1055px;top:290px;width:120px;height:14px;padding-left:2px">Posting Date</div>
<div class="a fld" style="left:1175px;top:290px;width:137px;height:13px;">05.01.06</div>
<div class="a lbl ul" style="left:1055px;top:305px;width:120px;height:14px;padding-left:2px">Delivery Date</div>
<div class="a fld" style="left:1175px;top:305px;width:137px;height:13px;">20.01.06</div>
<div class="a lbl ul" style="left:1055px;top:320px;width:120px;height:14px;padding-left:2px">Document Date</div>
<div class="a fld fw" style="left:1175px;top:320px;width:137px;height:13px;">05.01.06</div>
<div class="a" style="left:754px;top:416px;width:558px;height:270px;border:1px solid #c8c8c8;background:#fff"></div>
<div class="a tab" style="left:763px;top:400px;width:96px;height:17px;background:#fff">Contents</div>
<div class="a tab" style="left:858px;top:400px;width:88px;height:16px;background:#e8ecef">Logistics</div>
<div class="a tab" style="left:946px;top:400px;width:104px;height:16px;background:#e8ecef">Accounting</div>
<div class="a tab" style="left:1049px;top:400px;width:149px;height:16px;background:#e8ecef">Electronic Documents</div>
<div class="a tab" style="left:1197px;top:400px;width:106px;height:16px;background:#e8ecef">Attachments</div>
<div class="a lbl ul" style="left:764px;top:428px;width:116px;height:14px;padding-left:2px">Item/Service Type</div>
<div class="a fld" style="left:879px;top:428px;width:69px;height:13px;">Item</div>
<div class="a lbl ul" style="left:1117px;top:428px;width:109px;height:14px;padding-left:2px">Summary Type</div>
<div class="a fld fw dd" style="left:1225px;top:428px;width:81px;height:13px;">No Summary</div>
<table class="a g" style="left:764px;top:444px;width:524px"><colgroup><col style="width:18px"><col style="width:90px"><col style="width:80px"><col style="width:80px"><col style="width:100px"><col style="width:40px"><col style="width:50px"><col style="width:66px"></colgroup><tr class="h"><td style="padding-left:4px">#</td><td style="padding-left:4px">Item No.</td><td style="padding-left:4px">Item Descripti...</td><td style="padding-left:4px">Quantity</td><td style="padding-left:4px">Unit Price</td><td style="padding-left:4px">Disc...</td><td style="padding-left:4px">Tax Code</td><td style="padding-left:4px">Total (LC)</td></tr><tr><td class="rn">1</td><td style="padding-left:19px">A00006</td><td>HP 600 Series Inc</td><td class="r">50</td><td class="r">GBP 150.00</td><td class="r">0.00</td><td>I1</td><td></td></tr><tr><td class="rn">2</td><td style="padding-left:19px">B10000</td><td>Printer Label</td><td class="r">1,000</td><td class="r">GBP 0.38</td><td class="r">0.00</td><td>I1</td><td></td></tr><tr><td class="rn">3</td><td style="padding-left:19px">LM4029MC</td><td>Memory Chip</td><td class="r">10</td><td class="r">GBP 18.75</td><td class="r">0.00</td><td>I1</td><td></td></tr><tr><td class="rn">4</td><td style="padding-left:19px">S10000</td><td>Server Point 1000</td><td class="r">10</td><td class="r">GBP 701.25</td><td class="r">0.00</td><td>I1</td><td></td></tr><tr class="e"><td class="rn"></td><td></td><td></td><td></td><td></td><td></td><td></td><td></td></tr><tr class="e"><td class="rn"></td><td></td><td></td><td></td><td></td><td></td><td></td><td></td></tr><tr class="e"><td class="rn"></td><td></td><td></td><td></td><td></td><td></td><td></td><td></td></tr><tr class="e"><td class="rn"></td><td></td><td></td><td></td><td></td><td></td><td></td><td></td></tr><tr class="e"><td class="rn"></td><td></td><td></td><td></td><td></td><td></td><td></td><td></td></tr><tr class="e"><td class="rn"></td><td></td><td></td><td></td><td></td><td></td><td></td><td></td></tr></table>
<svg class="a" style="left:784px;top:466px" width="13" height="10" viewBox="0 0 13 10"><path d="M1 3.2H6.5V0.8L12 5L6.5 9.2V6.8H1Z" fill="#f2a900" stroke="#6b5000" stroke-width="0.9"/></svg>
<svg class="a" style="left:784px;top:482px" width="13" height="10" viewBox="0 0 13 10"><path d="M1 3.2H6.5V0.8L12 5L6.5 9.2V6.8H1Z" fill="#f2a900" stroke="#6b5000" stroke-width="0.9"/></svg>
<svg class="a" style="left:784px;top:498px" width="13" height="10" viewBox="0 0 13 10"><path d="M1 3.2H6.5V0.8L12 5L6.5 9.2V6.8H1Z" fill="#f2a900" stroke="#6b5000" stroke-width="0.9"/></svg>
<svg class="a" style="left:784px;top:514px" width="13" height="10" viewBox="0 0 13 10"><path d="M1 3.2H6.5V0.8L12 5L6.5 9.2V6.8H1Z" fill="#f2a900" stroke="#6b5000" stroke-width="0.9"/></svg>
<svg class="a" style="left:1289px;top:444px" width="14" height="14" viewBox="0 0 14 14"><rect x="0.5" y="0.5" width="13" height="13" fill="#fff" stroke="#c9d8e6"/><path d="M3 11L11 3M5 3H11V9" fill="none" stroke="#6fa0cc" stroke-width="1.6"/></svg>
<div class="a" style="left:798px;top:629px;width:243px;height:6px;border-radius:3px;background:#d8d8d8"></div>
<div class="a lbl ul" style="left:753px;top:688px;width:123px;height:14px;padding-left:2px">Buyer</div>
<div class="a fld fw dd" style="left:876px;top:688px;width:145px;height:13px;">James Chan (Buyer)</div>
<svg class="a" style="left:1023px;top:689px" width="12" height="12" viewBox="0 0 12 12"><circle cx="6" cy="6" r="5.2" fill="#fff" stroke="#c8d0d6"/><path d="M3.5 4H8.5M3.5 6H8.5M3.5 8H8.5" stroke="#b8c0c6"/></svg>
<div class="a lbl ul" style="left:753px;top:704px;width:123px;height:14px;padding-left:2px">Owner</div>
<div class="a fld fw" style="left:876px;top:704px;width:145px;height:13px;"></div>
<div class="a lbl" style="left:755px;top:782px">Remarks</div>
<div class="a ul" style="left:753px;top:825px;width:123px;height:14px"></div>
<div class="a" style="left:876px;top:781px;width:145px;height:58px;border:1px solid #b8b8b8;border-radius:2px;background:#fff"></div>
<div class="a" style="left:753px;top:862px;width:84px;height:14px;background:#2b4a6a;border-left:5px solid #e8a317;color:#fff;font-size:10px;text-align:center;line-height:19px">OK</div>
<div class="a" style="left:843px;top:862px;width:64px;height:14px;background:#2b4a6a;color:#fff;font-size:10px;text-align:center;line-height:19px">Cancel</div>
<div class="a" style="left:1211px;top:862px;width:100px;height:14px;background:#e6e8ea;color:#8aa0b0;font-size:10px;text-align:center;line-height:18px">Copy To</div>
<div class="a lbl ul" style="left:1054px;top:694px;width:120px;height:14px;padding-left:2px">Total Before Discount</div>
<div class="a fld" style="left:1174px;top:694px;width:137px;height:13px;text-align:right;padding-right:0;">GBP 15,080.00</div>
<div class="a lbl ul" style="left:1054px;top:709px;width:68px;height:14px;padding-left:2px">Discount</div>
<div class="a fld" style="left:1122px;top:709px;width:34px;height:13px;"></div>
<div class="a lbl ul" style="left:1158px;top:709px;width:16px;height:14px">%</div>
<div class="a fld" style="left:1174px;top:709px;width:137px;height:13px;text-align:right;padding-right:0;"></div>
<div class="a lbl ul" style="left:1055px;top:724px;width:106px;height:14px;padding-left:2px">Freight</div>
<svg class="a" style="left:1161px;top:726px" width="13" height="10" viewBox="0 0 13 10"><path d="M1 3.2H6.5V0.8L12 5L6.5 9.2V6.8H1Z" fill="#f2a900" stroke="#6b5000" stroke-width="0.9"/></svg>
<div class="a fld" style="left:1174px;top:724px;width:137px;height:13px;text-align:right;padding-right:0;"></div>
<div class="a" style="left:1057px;top:739px;width:12px;height:12px;border:1px solid #c0c6cc;background:#e8ecef"></div>
<div class="a lbl" style="left:1074px;top:739px;color:#7890a0">Ro<u>u</u>nding</div>
<div class="a fld" style="left:1174px;top:739px;width:137px;height:13px;text-align:right;padding-right:0;"></div>
<div class="a lbl ul" style="left:1054px;top:754px;width:120px;height:14px;padding-left:2px">Tax</div>
<div class="a fld" style="left:1174px;top:754px;width:137px;height:13px;text-align:right;padding-right:0;">GBP 2,586.22</div>
<div class="a lbl ul" style="left:1054px;top:769px;width:120px;height:14px;padding-left:2px">Total Payment Due</div>
<div class="a fld" style="left:1174px;top:769px;width:137px;height:13px;text-align:right;padding-right:0;">GBP 17,666.22</div>
</body></html>
